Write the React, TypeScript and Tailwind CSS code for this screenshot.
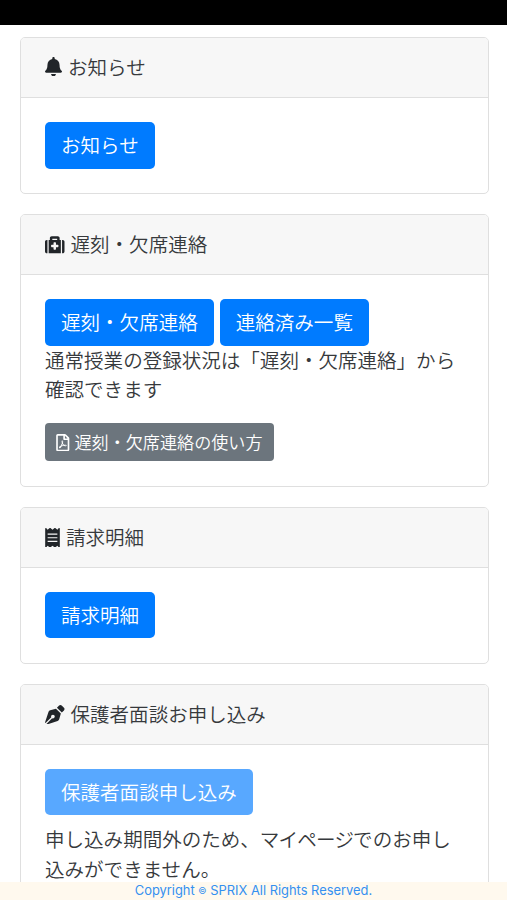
import type { ReactNode } from "react";
import { FaBell, FaMedkit, FaPenNib, FaReceipt, FaRegFilePdf } from "react-icons/fa";

function Card({ icon, title, children }: { icon: ReactNode; title: string; children: ReactNode }) {
  return (
    <section className="shrink-0 rounded-[5px] border border-[#dfdfdf] bg-white">
      <h2 className="flex h-[60px] items-center gap-[6px] rounded-t-[4px] border-b border-[#dfdfdf] bg-[#f7f7f7] pl-6 text-[#212529]">
        {icon}
        <span className="pb-[2px] text-[#36393c]">{title}</span>
      </h2>
      <div className="px-6 pt-6 pb-[24.5px]">{children}</div>
    </section>
  );
}

function Button({ children, disabled = false }: { children: ReactNode; disabled?: boolean }) {
  return (
    <button
      disabled={disabled}
      className="block h-[46.5px] rounded-[5px] bg-[#007bff] px-4 pb-px whitespace-nowrap text-white disabled:opacity-65"
    >
      {children}
    </button>
  );
}

export default function App() {
  return (
    <div className="flex h-[900px] w-full flex-col overflow-hidden bg-white font-['Noto_Sans_CJK_JP',sans-serif] text-[19.55px] leading-[29.4px] font-[350] text-[#36393c]">
      <div className="h-[25px] shrink-0 bg-black" />
      <main className="flex min-h-0 flex-1 flex-col gap-5 overflow-hidden pt-3 pr-[18px] pl-5">
        <Card icon={<FaBell className="-mt-[2px] h-[19.5px] w-[17px]" />} title="お知らせ">
          <Button>お知らせ</Button>
        </Card>
        <Card icon={<FaMedkit className="size-[19.5px]" />} title="遅刻・欠席連絡">
          <div className="flex gap-[6px]">
            <Button>遅刻・欠席連絡</Button>
            <Button>連絡済み一覧</Button>
          </div>
          <p className="-mt-px">
            通常授業の登録状況は「遅刻・欠席連絡」から
            <br />
            確認できます
          </p>
          <button className="mt-5 flex h-[38px] items-center gap-[5px] rounded-[4px] bg-[#6c757d] px-[11px] text-[17.1px] whitespace-nowrap text-white">
            <FaRegFilePdf className="h-[17.5px] w-[13.5px]" />
            <span className="pb-[2px]">遅刻・欠席連絡の使い方</span>
          </button>
        </Card>
        <Card icon={<FaReceipt className="h-[19.5px] w-[15px]" />} title="請求明細">
          <Button>請求明細</Button>
        </Card>
        <Card icon={<FaPenNib className="size-[19.5px]" />} title="保護者面談お申し込み">
          <Button disabled>保護者面談申し込み</Button>
          <p className="mt-[9px] whitespace-nowrap">
            申し込み期間外のため、<span className="tracking-[-0.8px]">マイページ</span>でのお申し
            <br />
            込みができません。
          </p>
        </Card>
      </main>
      <footer className="flex h-[18px] shrink-0 items-center justify-center bg-[#fff9ee] font-['Inter','Liberation_Sans',sans-serif] text-[12.9px] leading-[18px] font-normal text-[#3490f0]">
        <span>
          Copyright <span className="align-[1px] text-[9px]">©</span> SPRIX All Rights Reserved.
        </span>
      </footer>
    </div>
  );
}
